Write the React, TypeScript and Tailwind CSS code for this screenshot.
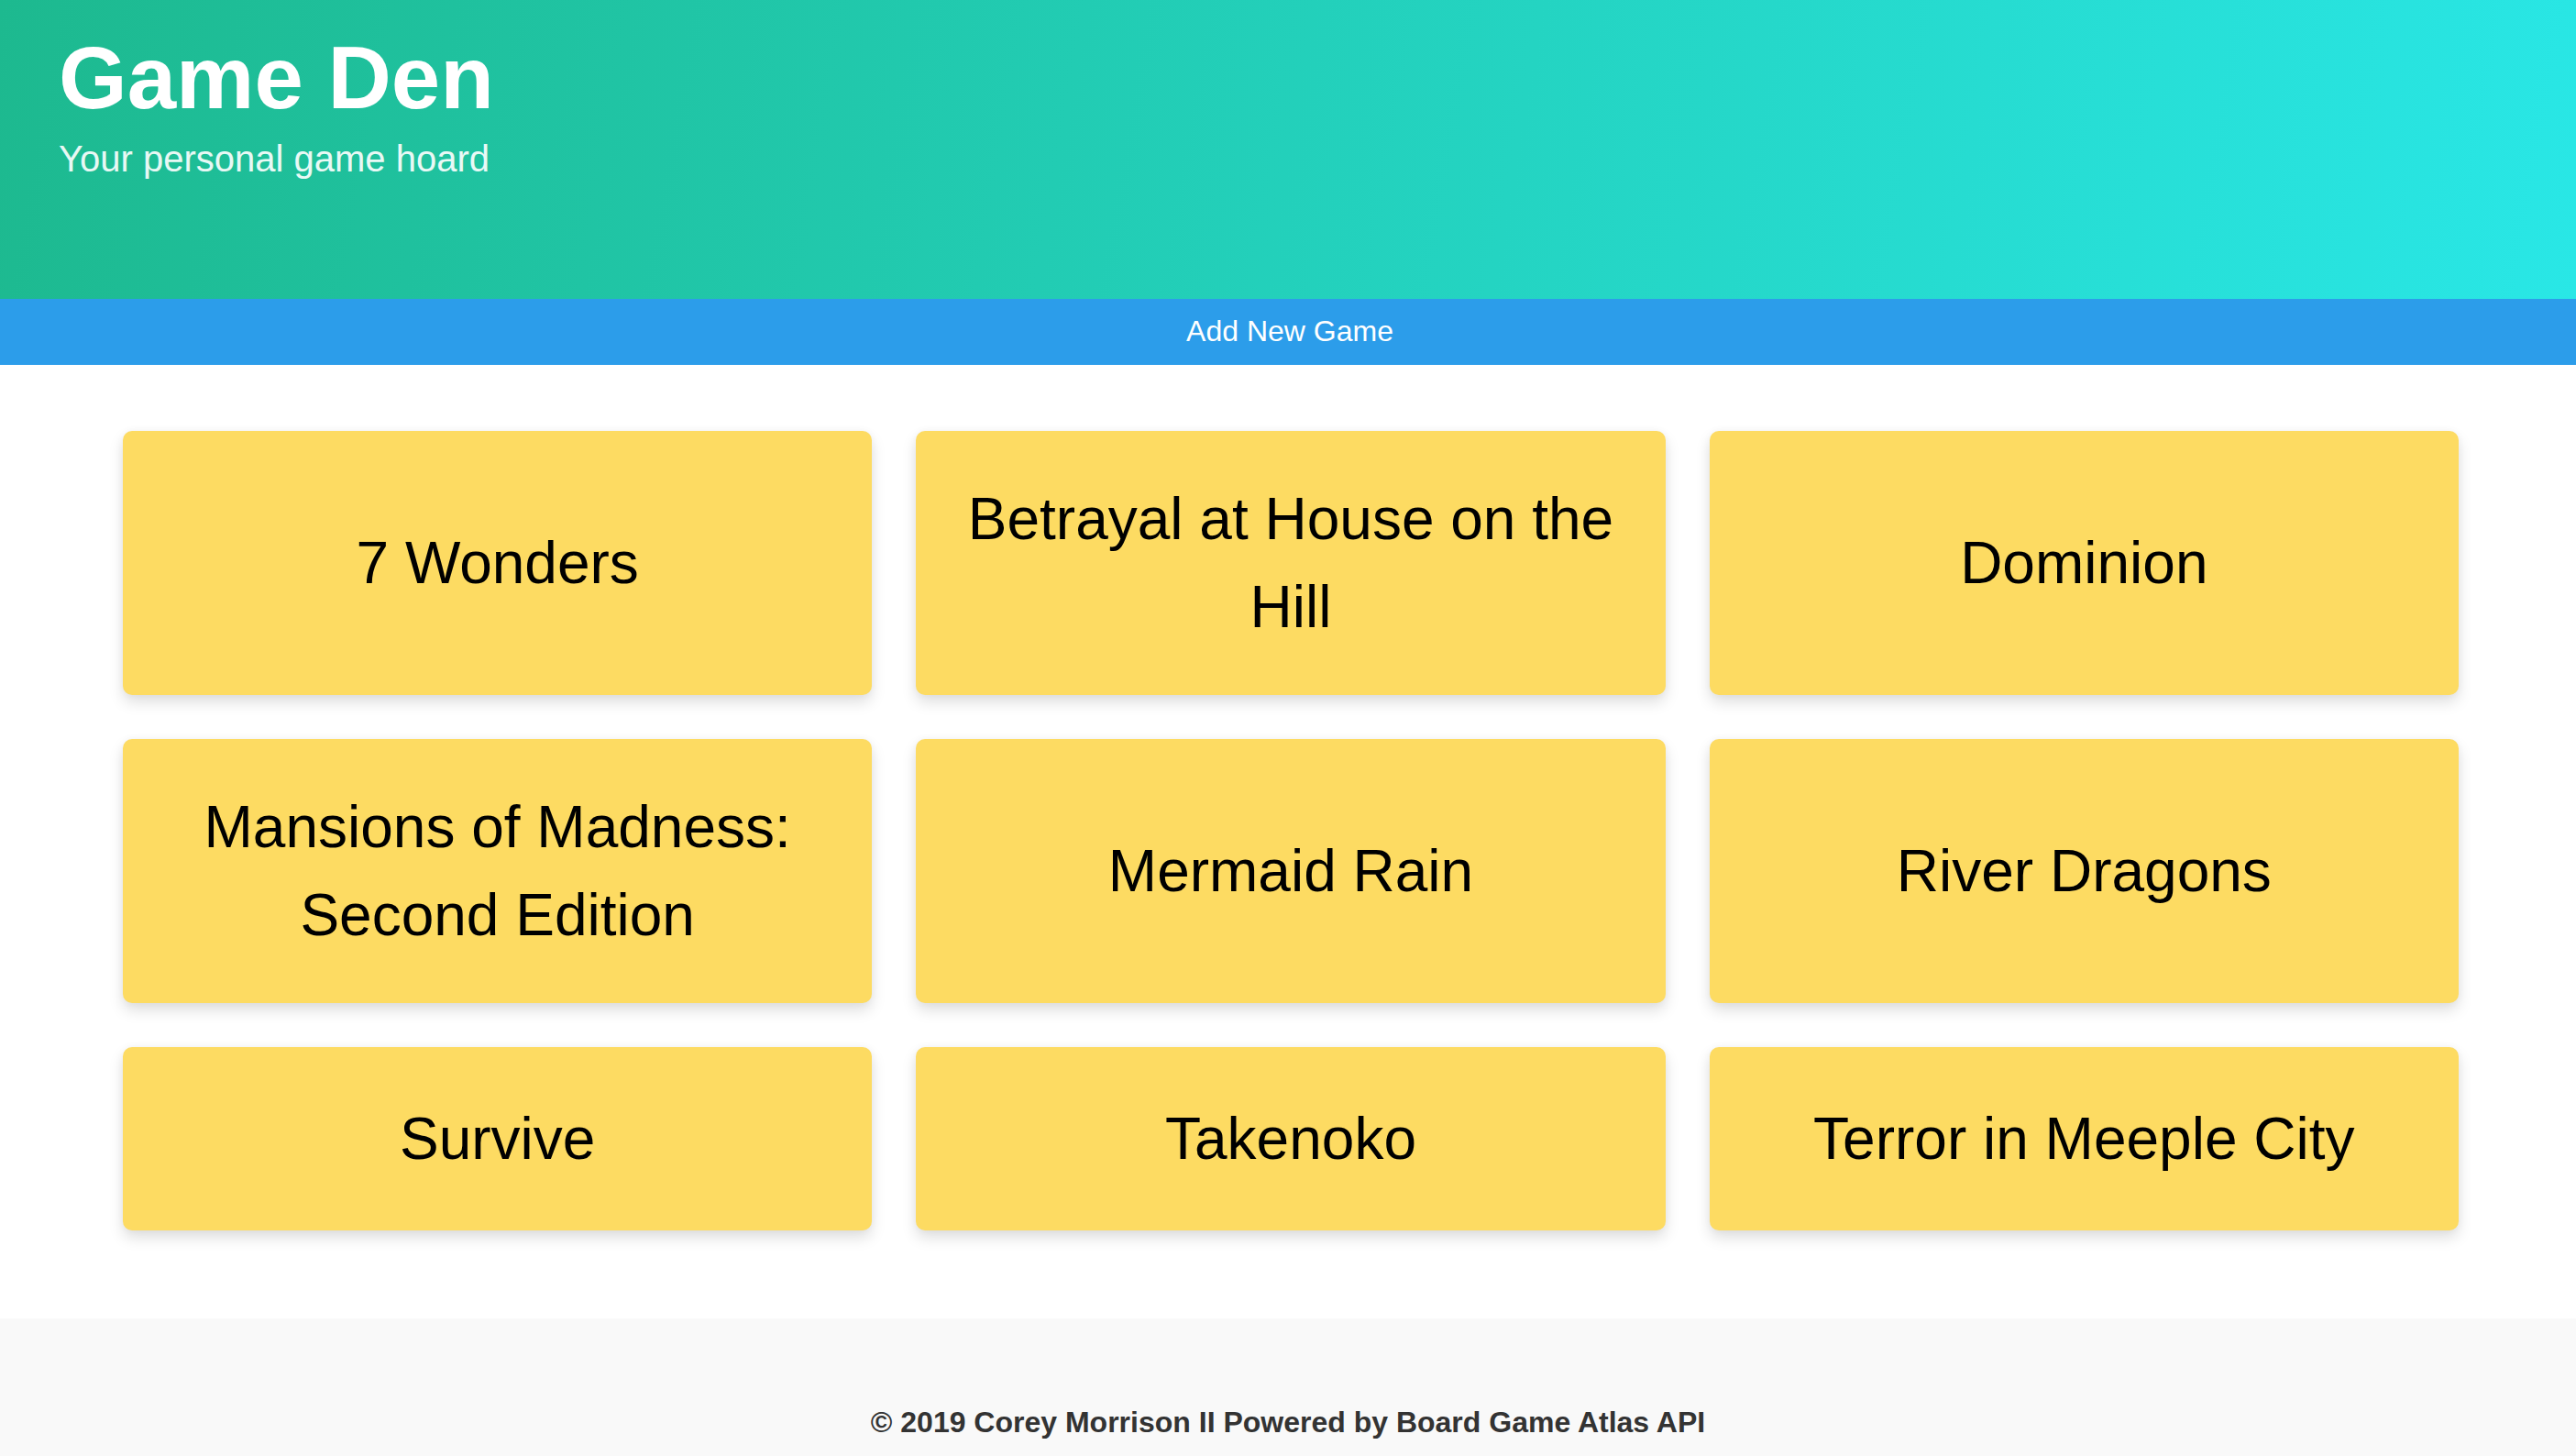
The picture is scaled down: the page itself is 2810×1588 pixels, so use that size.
import React from "react";

const games = [
  "7 Wonders",
  "Betrayal at House on the Hill",
  "Dominion",
  "Mansions of Madness: Second Edition",
  "Mermaid Rain",
  "River Dragons",
  "Survive",
  "Takenoko",
  "Terror in Meeple City",
];

function GameCard({ name }: { name: string }) {
  return (
    <div className="flex min-h-[200px] items-center justify-center rounded-[10px] bg-[#fddb62] px-[48px] py-[48px] text-center shadow-[0_8px_16px_rgba(0,0,0,0.13),0_0_8px_rgba(0,0,0,0.04)]">
      <span className="text-[64px] leading-[96px] text-black">{name}</span>
    </div>
  );
}

export default function App() {
  return (
    <div className="min-h-screen bg-white font-['Liberation_Sans',Arial,sans-serif]">
      <header className="h-[326px] bg-[linear-gradient(100deg,#1db98f,#29e7e6)] pl-[64px] pt-[37px]">
        <h1 className="text-[96px] font-bold leading-none text-white">Game Den</h1>
        <p className="mt-[20px] text-[40px] leading-none text-white/90">Your personal game hoard</p>
      </header>

      <nav className="flex h-[72px] items-center justify-center bg-[#2c9dea] pb-[3px] pl-[4px]">
        <span className="text-[32px] leading-none text-white">Add New Game</span>
      </nav>

      <main className="pb-[96px] pl-[134px] pr-[128px] pt-[72px]">
        <div className="grid grid-cols-3 gap-[48px]">
          {games.map((g) => (
            <GameCard key={g} name={g} />
          ))}
        </div>
      </main>

      <footer className="bg-[#f9f9f9] pb-[60px] pt-[97px] text-center">
        <p className="text-[32px] font-bold leading-none text-[#333]">
          © 2019 Corey Morrison II Powered by Board Game Atlas API
        </p>
      </footer>
    </div>
  );
}
